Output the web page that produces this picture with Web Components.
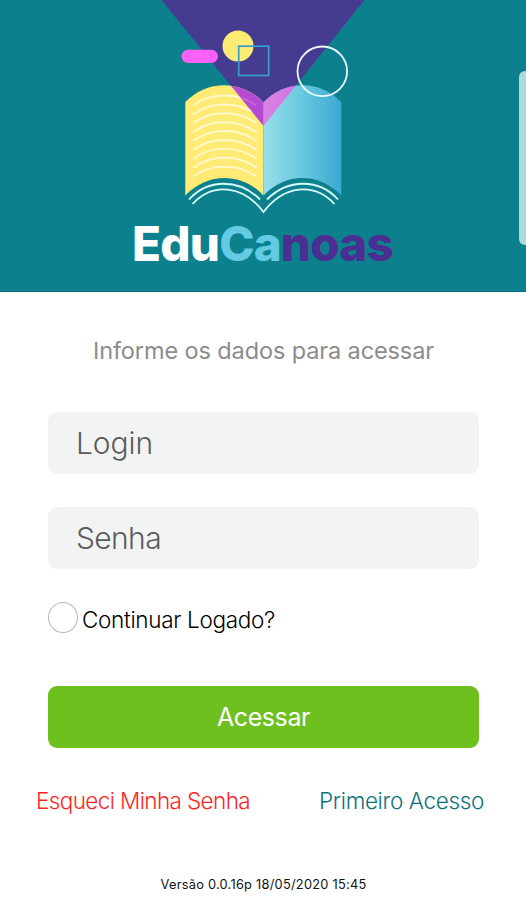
<!DOCTYPE html>
<html lang="pt-BR">
<head>
<meta charset="utf-8">
<title>EduCanoas</title>
<style>
html,body{margin:0;padding:0;background:#fff}
body{width:526px;height:900px;overflow:hidden;font-family:Inter,Lato,sans-serif}
</style>
</head>
<body>
<edu-login></edu-login>
<script>
// Single line of text; "fit" spreads the letters over the given width.
customElements.define('fit-text', class extends HTMLElement {
  connectedCallback() {
    const root = this.attachShadow({mode: 'open'});
    root.innerHTML = `<style>:host{display:block;white-space:nowrap;line-height:1.2}span{display:inline-block}</style><span><slot></slot></span>`;
    const span = root.querySelector('span');
    const target = Number(this.getAttribute('fit'));
    const count = this.textContent.length;
    const gap = (target - span.getBoundingClientRect().width) / count;
    span.style.letterSpacing = gap.toFixed(3) + 'px';
  }
});

customElements.define('edu-art', class extends HTMLElement {
  connectedCallback() {
    const lines = Array.from({length: 9}, (_, i) => {
      const y = 105 + i * 8.88;
      return `<path d="M194 ${y}C211 ${y - 12.6} 237 ${y - 12.6} 256 ${y}"/>`;
    }).join('');
    this.attachShadow({mode: 'open'}).innerHTML = `
    <style>:host{display:block;height:218px}svg{display:block}</style>
    <svg width="526" height="218" viewBox="0 0 526 218" fill="none">
      <defs>
        <linearGradient id="blue"><stop stop-color="#98deeb"/><stop offset=".5" stop-color="#68c8df"/><stop offset="1" stop-color="#3ba8cf"/></linearGradient>
        <linearGradient id="pink"><stop stop-color="#d983e4"/><stop offset="1" stop-color="#c35fd5"/></linearGradient>
        <clipPath id="tri"><path d="M161.5 0H364.5L263.5 126Z"/></clipPath>
      </defs>
      <path d="M161.5 0H364.5L263.5 126Z" fill="#453c92"/>
      <path d="M185.3 102C207 79.5 242 79.5 263.5 102.5V195.5C242 172 207 172 185.3 195.5Z" fill="#fdeb75"/>
      <path d="M263.5 102.5C285 79.5 320 79.5 341.3 102V195.5C320 172 285 172 263.5 195.5Z" fill="url(#blue)"/>
      <g stroke="#fff9cc" stroke-width="1.9" stroke-linecap="round">${lines}</g>
      <g clip-path="url(#tri)">
        <path d="M185.3 102C207 79.5 242 79.5 263.5 102.5V195H185Z" fill="#b54bd0"/>
        <path d="M263.5 102.5C285 79.5 320 79.5 341.3 102V195H263.5Z" fill="url(#pink)"/>
        <path d="M194 105C211 92.4 237 92.4 256 105" stroke="#cf70dc" stroke-width="1.3"/>
      </g>
      <g stroke="#d8fbfb" stroke-width="1.8">
        <path d="M189 199.5C208 178.5 239 178.5 260 199.5M267 199.5C288 178.5 319 178.5 338 199.5"/>
        <path d="M192.5 204C213 182 243 185 263.5 212C284 185 314 182 334.5 204"/>
      </g>
      <circle cx="238" cy="46" r="15.5" fill="#fdec74"/>
      <rect x="181.5" y="49.7" width="36.5" height="13.3" rx="6.65" fill="#fc61f6"/>
      <rect x="238.7" y="46.2" width="30" height="29.3" stroke="#319fd0" stroke-width="1.7"/>
      <circle cx="322.3" cy="71.3" r="24.8" stroke="#eafaff" stroke-width="1.8"/>
    </svg>`;
  }
});

customElements.define('edu-header', class extends HTMLElement {
  connectedCallback() {
    this.attachShadow({mode: 'open'}).innerHTML = `
    <style>
      :host{display:block;position:relative;height:292px;box-sizing:border-box;background:#0c818d;border-bottom:1px solid #0a717c;overflow:hidden}
      fit-text{margin:-3px 0 0 132px;font:800 47.5px Inter,sans-serif;line-height:58px;color:#fff}
      .c{color:#62cbe3}.n{color:#4a2e91}
      .tab{position:absolute;left:519px;top:71px;width:14px;height:174px;border-radius:6px;background:#b0d8dc}
    </style>
    <edu-art></edu-art>
    <fit-text fit="261">Edu<span class="c">Ca</span><span class="n">noas</span></fit-text>
    <div class="tab"></div>`;
  }
});

customElements.define('edu-field', class extends HTMLElement {
  connectedCallback() {
    this.attachShadow({mode: 'open'}).innerHTML = `
    <style>:host{display:flex;align-items:center;box-sizing:border-box;height:62px;padding-left:28px;border-radius:9px;background:#f2f4f4;color:#5c5c5c;font-size:30px;font-weight:300}</style>
    <slot></slot>`;
  }
});

customElements.define('edu-check', class extends HTMLElement {
  connectedCallback() {
    this.attachShadow({mode: 'open'}).innerHTML = `
    <style>:host{display:flex;align-items:center;height:31px;gap:4px;color:#000;font-size:22.5px;font-weight:300}
    i{box-sizing:border-box;width:30px;height:31px;border:1px solid #b8b8b8;border-radius:50%}
    ::slotted(*){margin-top:4px}</style>
    <i></i><slot></slot>`;
  }
});

customElements.define('edu-button', class extends HTMLElement {
  connectedCallback() {
    this.attachShadow({mode: 'open'}).innerHTML = `
    <style>:host{display:flex;align-items:center;justify-content:center;height:62px;border-radius:9px;background:#6dc01e;color:#fff;font-size:25px;font-weight:400}</style>
    <slot></slot>`;
  }
});

customElements.define('edu-login', class extends HTMLElement {
  connectedCallback() {
    this.attachShadow({mode: 'open'}).innerHTML = `
    <style>
      :host{display:block;width:526px;height:900px}
      main{display:flex;flex-direction:column;padding:0 47px 0 48px}
      .hint{align-self:center;margin-top:44px;font-size:23.5px;line-height:29px;color:#8c8c8c;font-weight:400}
      .login{margin-top:47px}.senha{margin-top:33px}
      edu-check{margin-top:33px}
      edu-button{margin-top:53px}
      nav{display:flex;justify-content:space-between;margin:39px -5px 0 -12px;font-size:22.5px;line-height:28px;font-weight:300}
      .forgot{color:#ff1f26}.first{color:#0b727d}
      .version{align-self:center;margin-top:63px;font-size:12.8px;line-height:16px;color:#111;font-weight:400}
    </style>
    <edu-header></edu-header>
    <main>
      <fit-text class="hint" fit="341">Informe os dados para acessar</fit-text>
      <edu-field class="login"><fit-text fit="77">Login</fit-text></edu-field>
      <edu-field class="senha"><fit-text fit="85">Senha</fit-text></edu-field>
      <edu-check><fit-text fit="193">Continuar Logado?</fit-text></edu-check>
      <edu-button><fit-text fit="93">Acessar</fit-text></edu-button>
      <nav><fit-text class="forgot" fit="214">Esqueci Minha Senha</fit-text><fit-text class="first" fit="165">Primeiro Acesso</fit-text></nav>
      <fit-text class="version" fit="206">Versão 0.0.16p 18/05/2020 15:45</fit-text>
    </main>`;
  }
});
</script>
</body>
</html>
